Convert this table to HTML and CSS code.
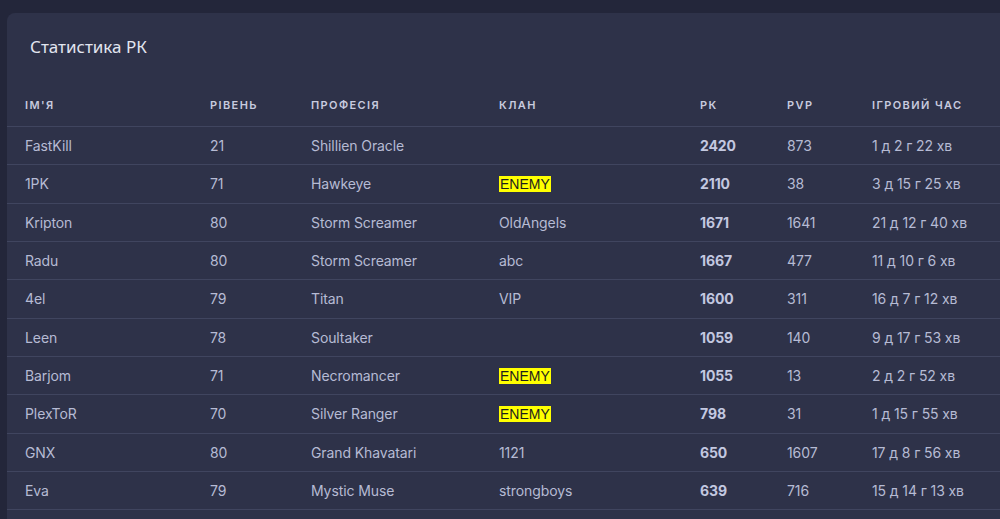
FILE: index.html
```html
<!DOCTYPE html>
<html lang="uk">
<head>
<meta charset="utf-8">
<title>Статистика РК</title>
<link rel="stylesheet" href="styles.css">
</head>
<body>
<section class="card">
  <h2 class="title">Статистика РК</h2>
  <div class="table">
    <div class="row head">
      <div>Ім'я</div><div>Рівень</div><div>Професія</div><div>Клан</div><div>РК</div><div>PVP</div><div>Ігровий час</div>
    </div>
    <div class="row"><div>FastKill</div><div>21</div><div>Shillien Oracle</div><div></div><div class="pk">2420</div><div>873</div><div>1 д 2 г 22 хв</div></div>
    <div class="row"><div>1PK</div><div>71</div><div>Hawkeye</div><div><mark class="enemy">ENEMY</mark></div><div class="pk">2110</div><div>38</div><div>3 д 15 г 25 хв</div></div>
    <div class="row"><div>Kripton</div><div>80</div><div>Storm Screamer</div><div>OldAngels</div><div class="pk">1671</div><div>1641</div><div>21 д 12 г 40 хв</div></div>
    <div class="row"><div>Radu</div><div>80</div><div>Storm Screamer</div><div>abc</div><div class="pk">1667</div><div>477</div><div>11 д 10 г 6 хв</div></div>
    <div class="row"><div>4el</div><div>79</div><div>Titan</div><div>VIP</div><div class="pk">1600</div><div>311</div><div>16 д 7 г 12 хв</div></div>
    <div class="row"><div>Leen</div><div>78</div><div>Soultaker</div><div></div><div class="pk">1059</div><div>140</div><div>9 д 17 г 53 хв</div></div>
    <div class="row"><div>Barjom</div><div>71</div><div>Necromancer</div><div><mark class="enemy">ENEMY</mark></div><div class="pk">1055</div><div>13</div><div>2 д 2 г 52 хв</div></div>
    <div class="row"><div>PlexToR</div><div>70</div><div>Silver Ranger</div><div><mark class="enemy">ENEMY</mark></div><div class="pk">798</div><div>31</div><div>1 д 15 г 55 хв</div></div>
    <div class="row"><div>GNX</div><div>80</div><div>Grand Khavatari</div><div>1121</div><div class="pk">650</div><div>1607</div><div>17 д 8 г 56 хв</div></div>
    <div class="row"><div>Eva</div><div>79</div><div>Mystic Muse</div><div>strongboys</div><div class="pk">639</div><div>716</div><div>15 д 14 г 13 хв</div></div>
  </div>
</section>
</body>
</html>
```

FILE: styles.css
```css
html, body {
  margin: 0;
  padding: 0;
  overflow: hidden;
  background: #23263a;
  height: 519px;
}

body {
  box-sizing: border-box;
  padding: 13px 0 0 7px;
  font-family: Inter, "Noto Sans", sans-serif;
}

.card {
  width: 1020px;
  height: 506px;
  overflow: hidden;
  background: #2e3249;
  border-radius: 8px 8px 0 0;
  padding-top: 22px;
  box-sizing: border-box;
}

.title {
  margin: 0 0 22px 23px;
  font-family: "Noto Sans", sans-serif;
  font-size: 17px;
  line-height: 24px;
  font-weight: 400;
  color: #e2e5f0;
}

.row {
  display: grid;
  grid-template-columns: 185px 101px 188px 201px 87px 85px 1fr;
  align-items: center;
  height: 38.33px;
  box-sizing: border-box;
  border-bottom: 1px solid #40455f;
  font-size: 14px;
  letter-spacing: -0.1px;
  color: #b6bbd4;
}

.row > div {
  padding-left: 18px;
  white-space: nowrap;
}

.row.head {
  height: 46px;
  font-size: 11px;
  font-weight: 600;
  letter-spacing: 1.4px;
  text-transform: uppercase;
  color: #c8cbdf;
  padding-top: 2px;
}

.pk {
  font-weight: 700;
  color: #c3c8e0;
}

.enemy {
  background: #ffff00;
  color: #1e1e1e;
  font-family: "Liberation Sans", Arial, sans-serif;
  font-size: 14px;
  letter-spacing: 0;
  padding: 0 1px;
}
```
